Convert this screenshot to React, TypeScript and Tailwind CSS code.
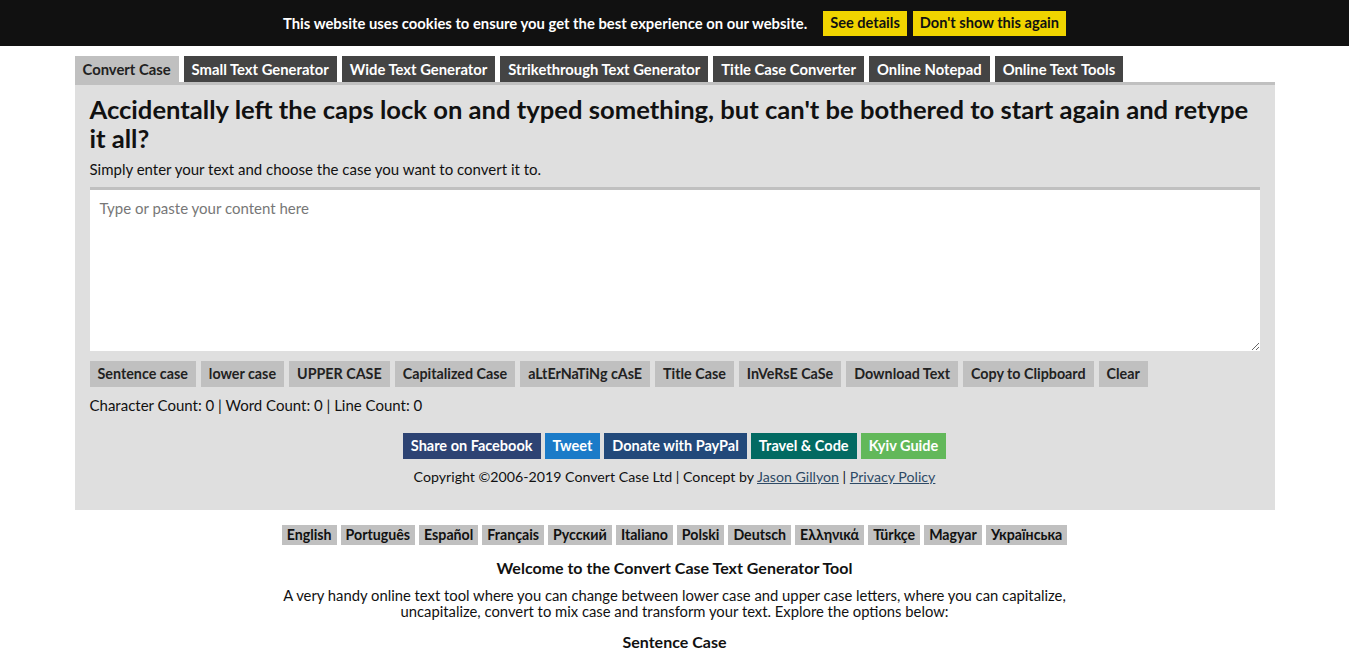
import React from 'react';

const tabs = [
  'Convert Case',
  'Small Text Generator',
  'Wide Text Generator',
  'Strikethrough Text Generator',
  'Title Case Converter',
  'Online Notepad',
  'Online Text Tools',
];

const caseButtons = [
  'Sentence case',
  'lower case',
  'UPPER CASE',
  'Capitalized Case',
  'aLtErNaTiNg cAsE',
  'Title Case',
  'InVeRsE CaSe',
  'Download Text',
  'Copy to Clipboard',
  'Clear',
];

const shareButtons = [
  { label: 'Share on Facebook', cls: 'bg-[#2d4373]' },
  { label: 'Tweet', cls: 'bg-[#1b7bc8]' },
  { label: 'Donate with PayPal', cls: 'bg-[#22497a]' },
  { label: 'Travel & Code', cls: 'bg-[#026a62]' },
  { label: 'Kyiv Guide', cls: 'bg-[#62b85a]' },
];

const languages = [
  'English',
  'Português',
  'Español',
  'Français',
  'Русский',
  'Italiano',
  'Polski',
  'Deutsch',
  'Ελληνικά',
  'Türkçe',
  'Magyar',
  'Українська',
];

export default function App() {
  return (
    // page width excludes the 17px scrollbar strip seen in the screenshot
    <div className="w-[1349px] h-[654px] overflow-hidden bg-white text-[#111] font-['Lato',sans-serif]">
      {/* cookie bar */}
      <div className="h-[46px] bg-[#111] flex items-center justify-center gap-[6px]">
        <span className="text-white font-bold text-[14.8px] mr-[10px]">
          This website uses cookies to ensure you get the best experience on our website.
        </span>
        <button className="h-[25px] px-[7px] bg-[#f0d400] text-[#111] font-bold text-[14.6px]">See details</button>
        <button className="h-[25px] px-[7px] bg-[#f0d400] text-[#111] font-bold text-[14.6px]">Don't show this again</button>
      </div>

      <div className="w-[1200px] mx-auto">
        {/* tabs */}
        <div className="flex gap-[5px] pt-[10px]">
          {tabs.map((t, i) => (
            <div
              key={t}
              className={
                'h-[26px] px-[8px] flex items-center text-[14.8px] font-bold ' +
                (i === 0 ? 'bg-[#c0c0c0] text-[#222]' : 'bg-[#444] text-white')
              }
            >
              {t}
            </div>
          ))}
        </div>

        {/* main panel */}
        <div className="border-t-[3px] border-[#c0c0c0] bg-[#dfdfdf] px-[15px] pt-[10px] pb-[24px]">
          <h1 className="text-[25.6px] font-bold leading-[29px] text-[#111]">
            Accidentally left the caps lock on and typed something, but can't be bothered to start again and retype it all?
          </h1>
          <p className="text-[15px] mt-[7px] leading-[18px]">
            Simply enter your text and choose the case you want to convert it to.
          </p>
          <textarea
            className="block w-full h-[164px] mt-[9px] bg-white border-t-[3px] border-[#c0c0c0] px-[10px] pt-[9px] text-[15px] leading-[18px] outline-none resize-y placeholder:text-[#777]"
            placeholder="Type or paste your content here"
          />
          <div className="flex flex-wrap gap-[5px] mt-[10px]">
            {caseButtons.map((b) => (
              <button key={b} className="h-[26px] px-[8px] bg-[#c0c0c0] text-[14.3px] font-bold text-[#222]">
                {b}
              </button>
            ))}
          </div>
          <p className="text-[15px] mt-[9px] leading-[18px]">
            Character Count: 0 | Word Count: 0 | Line Count: 0
          </p>
          <div className="flex justify-center gap-[4px] mt-[19px]">
            {shareButtons.map((s) => (
              <button key={s.label} className={'h-[26px] px-[8px] text-white text-[14.5px] font-bold ' + s.cls}>
                {s.label}
              </button>
            ))}
          </div>
          <p className="text-center text-[14.2px] mt-[9px] leading-[18px]">
            Copyright ©2006-2019 Convert Case Ltd | Concept by{' '}
            <a href="#" className="underline text-[#2e4a66]">Jason Gillyon</a> |{' '}
            <a href="#" className="underline text-[#2e4a66]">Privacy Policy</a>
          </p>
        </div>

        {/* languages */}
        <div className="flex justify-center gap-[4px] mt-[15px]">
          {languages.map((l) => (
            <span key={l} className="h-[20px] px-[5px] bg-[#c0c0c0] text-[14.2px] font-bold flex items-center text-[#111]">
              {l}
            </span>
          ))}
        </div>

        <div className="text-center text-[14.8px] mt-[14px]">
          <h2 className="font-bold text-[16px] leading-[18px]">Welcome to the Convert Case Text Generator Tool</h2>
          <p className="mt-[10px] leading-[16px] max-w-[800px] mx-auto">
            A very handy online text tool where you can change between lower case and upper case letters, where you can capitalize, uncapitalize, convert to mix case and transform your text. Explore the options below:
          </p>
          <h3 className="font-bold text-[16px] mt-[14px] leading-[18px]">Sentence Case</h3>
        </div>
      </div>
    </div>
  );
}
